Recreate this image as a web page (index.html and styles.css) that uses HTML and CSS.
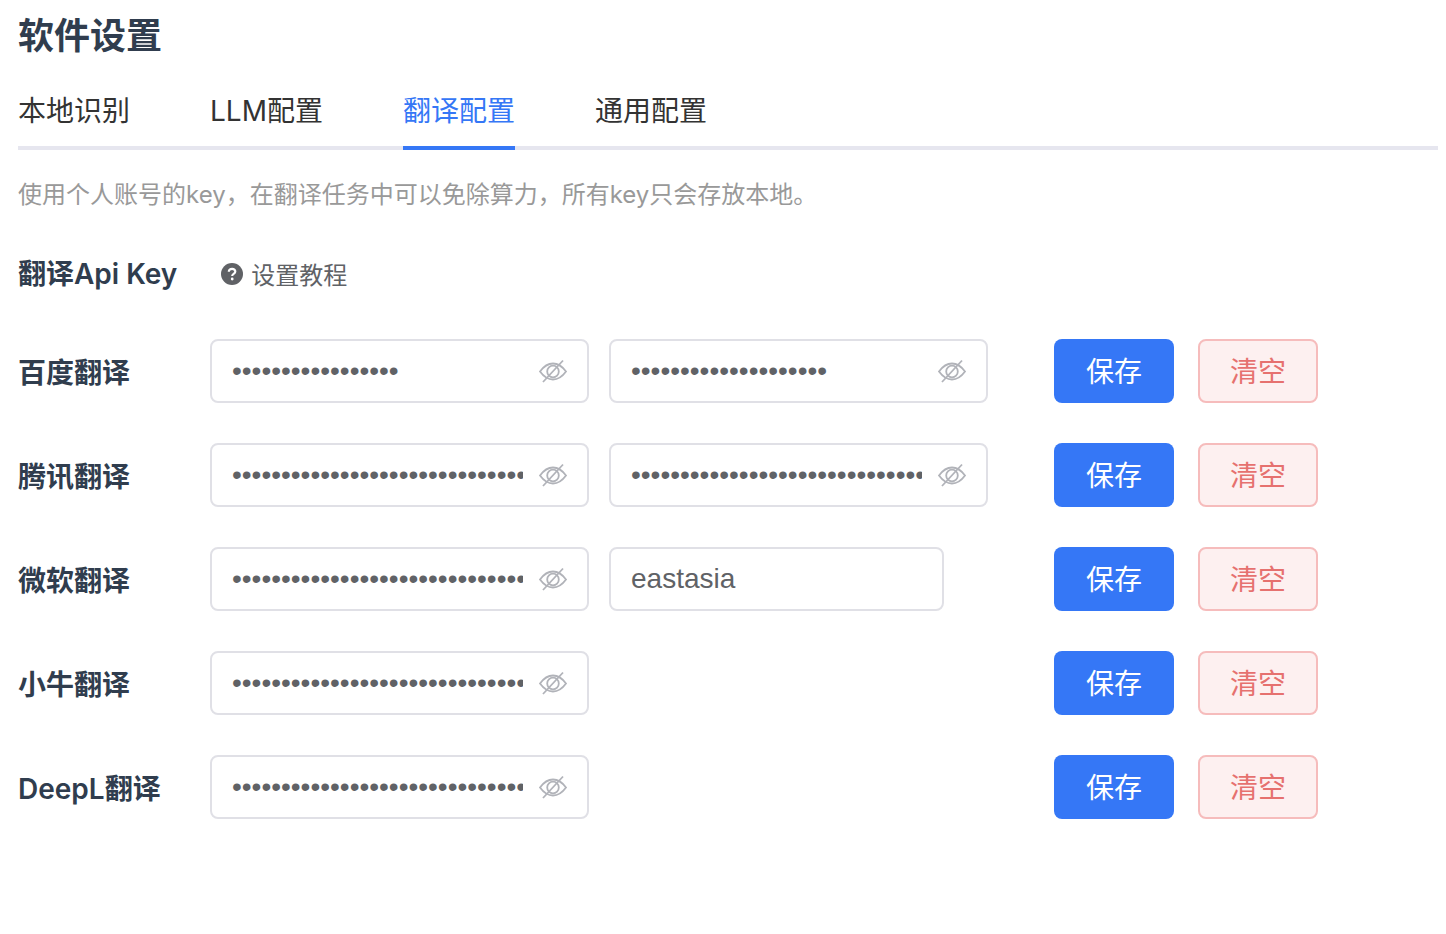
FILE: index.html
```html
<html>
	<head>
		<meta charset="utf-8">
		<title>软件设置</title>
		<link rel="stylesheet" href="styles.css">
	</head>
	<body>
		<div id="container">
			<h1>软件设置</h1>
			<div class="tabs">
				<a class="tab">本地识别</a>
				<a class="tab">LLM配置</a>
				<a class="tab active">翻译配置</a>
				<a class="tab">通用配置</a>
			</div>
			<p class="hint">使用个人账号的key，在翻译任务中可以免除算力，所有key只会存放本地。</p>
			<div class="section-head">
				<h2>翻译Api Key</h2>
				<a class="help">
					<svg class="help-icon" viewBox="0 0 22 22"><circle cx="11" cy="11" r="11" fill="#606266"/><path d="M7.800 8.800c0-1.900 1.400-3 3.300-3s3.200 1.100 3.200 2.700c0 2.400-3.100 2.400-3.100 4.400" fill="none" stroke="#fff" stroke-width="2.200"/><circle cx="11.200" cy="16" r="1.400" fill="#fff"/></svg>
					设置教程
				</a>
			</div>

			<div class="row">
				<label>百度翻译</label>
				<div class="fields">
					<div class="field"><input type="password" readonly value="aaaaaaaaaaaaaaaaa"><svg class="eye" viewBox="0 0 28 28"><use href="#eye-off"/></svg></div>
					<div class="field"><input type="password" readonly value="aaaaaaaaaaaaaaaaaaaa"><svg class="eye" viewBox="0 0 28 28"><use href="#eye-off"/></svg></div>
				</div>
				<button class="save">保存</button>
				<button class="clear">清空</button>
			</div>
			<div class="row">
				<label>腾讯翻译</label>
				<div class="fields">
					<div class="field"><input type="password" readonly value="aaaaaaaaaaaaaaaaaaaaaaaaaaaaaaaaaaaaaaaa"><svg class="eye" viewBox="0 0 28 28"><use href="#eye-off"/></svg></div>
					<div class="field"><input type="password" readonly value="aaaaaaaaaaaaaaaaaaaaaaaaaaaaaaaaaaaaaaaa"><svg class="eye" viewBox="0 0 28 28"><use href="#eye-off"/></svg></div>
				</div>
				<button class="save">保存</button>
				<button class="clear">清空</button>
			</div>
			<div class="row">
				<label>微软翻译</label>
				<div class="fields">
					<div class="field"><input type="password" readonly value="aaaaaaaaaaaaaaaaaaaaaaaaaaaaaaaaaaaaaaaa"><svg class="eye" viewBox="0 0 28 28"><use href="#eye-off"/></svg></div>
					<div class="field short"><input type="text" readonly value="eastasia"></div>
				</div>
				<button class="save">保存</button>
				<button class="clear">清空</button>
			</div>
			<div class="row">
				<label>小牛翻译</label>
				<div class="fields">
					<div class="field"><input type="password" readonly value="aaaaaaaaaaaaaaaaaaaaaaaaaaaaaaaaaaaaaaaa"><svg class="eye" viewBox="0 0 28 28"><use href="#eye-off"/></svg></div>
				</div>
				<button class="save">保存</button>
				<button class="clear">清空</button>
			</div>
			<div class="row">
				<label>DeepL翻译</label>
				<div class="fields">
					<div class="field"><input type="password" readonly value="aaaaaaaaaaaaaaaaaaaaaaaaaaaaaaaaaaaaaaaa"><svg class="eye" viewBox="0 0 28 28"><use href="#eye-off"/></svg></div>
				</div>
				<button class="save">保存</button>
				<button class="clear">清空</button>
			</div>
		</div>

		<svg width="0" height="0" class="defs">
			<symbol id="eye-off" viewBox="0 0 28 28">
				<path d="M1 14.500C5 9 9.500 6.500 14 6.500S23 9 27 14.500C23 20 18.500 22.500 14 22.500S5 20 1 14.500z" fill="none" stroke="currentColor" stroke-width="1.800"/>
				<circle cx="14" cy="14.500" r="5.800" fill="none" stroke="currentColor" stroke-width="1.800"/>
				<path d="M24 3.500 4 25" fill="none" stroke="currentColor" stroke-width="1.800"/>
			</symbol>
		</svg>
	</body>
</html>
```
FILE: styles.css
```css
body {
	margin: 0;
	background: #fff;
	font-family: Inter, "Noto Sans CJK SC", sans-serif;
}
#container {
	padding: 0 8px 0 18px;
}
h1 {
	margin: 0;
	padding-top: 10px;
	font-size: 36px;
	line-height: 52px;
	font-weight: 600;
	color: #303d4e;
}
.tabs {
	display: flex;
	gap: 80px;
	margin-top: 20px;
	border-bottom: 4px solid #e6e6ef;
}
.tab {
	height: 64px;
	line-height: 58px;
	margin-bottom: -4px;
	font-size: 28px;
	color: #333;
	border-bottom: 4px solid transparent;
}
.tab.active {
	color: #3577f6;
	border-bottom-color: #3577f6;
}
.hint {
	margin: 30px 0 0;
	font-size: 24px;
	line-height: 30px;
	color: #999;
}
.section-head {
	display: flex;
	align-items: center;
	margin-top: 41px;
	height: 44px;
}
h2 {
	margin: 0 0 2px;
	font-size: 28px;
	font-weight: 600;
	color: #303d4e;
}
.help {
	display: flex;
	align-items: center;
	gap: 8px;
	margin-left: 44px;
	font-size: 24px;
	color: #606266;
}
.help-icon {
	width: 22px;
	height: 22px;
	margin-top: 2px;
}
.row {
	display: flex;
	align-items: center;
	height: 64px;
	margin-top: 40px;
}
.section-head + .row {
	margin-top: 44px;
}
label {
	width: 192px;
	font-size: 28px;
	font-weight: 600;
	color: #303d4e;
}
.fields {
	display: flex;
	gap: 20px;
	width: 778px;
}
.field {
	display: flex;
	align-items: center;
	box-sizing: border-box;
	width: 379px;
	height: 64px;
	padding: 0 20px 0 20px;
	background: #fff;
	border: 2px solid #e0e0e6;
	border-radius: 8px;
}
.field.short {
	width: 335px;
}
.field input {
	flex: 1;
	min-width: 0;
	padding: 0;
	border: 0;
	outline: 0;
	background: none;
	font: 28px "Liberation Sans", sans-serif;
	color: #606266;
}
.eye {
	width: 28px;
	height: 28px;
	margin-left: 16px;
	color: #b1b3b9;
}
.defs {
	position: absolute;
}
button {
	box-sizing: border-box;
	width: 120px;
	height: 64px;
	padding: 0 0 3px;
	border-radius: 8px;
	font: 28px Inter, "Noto Sans CJK SC", sans-serif;
}
.save {
	margin-left: 66px;
	background: #3577f6;
	border: 0;
	color: #fff;
}
.clear {
	margin-left: 24px;
	background: #fdf0f0;
	border: 2px solid #f6bcbc;
	color: #e6716f;
}
```
